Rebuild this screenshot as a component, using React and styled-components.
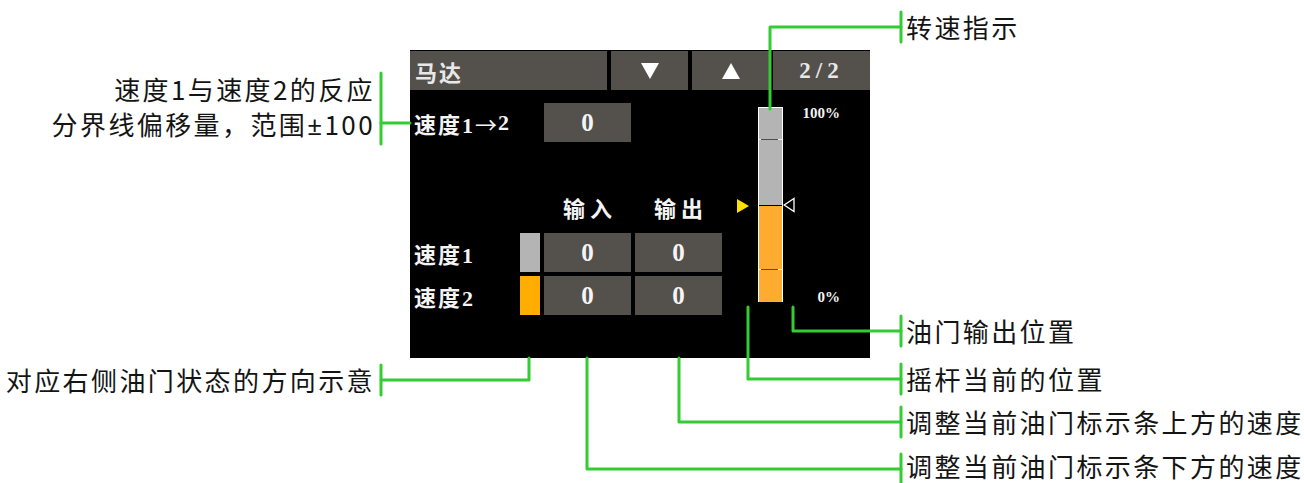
import React from "react";
import styled, { createGlobalStyle } from "styled-components";

const GREEN = "#33cc33";
const PANEL = "#54504c";

const GlobalStyle = createGlobalStyle`
    html, body {
        margin: 0;
        padding: 0;
        background: #fff;
    }
    body {
        font-family: "Noto Sans CJK SC", sans-serif;
    }
`;

const Canvas = styled.div`
    position: relative;
    width: 1304px;
    height: 483px;
    box-sizing: border-box;
    padding: 50px 0 0 410px;
    background: #fff;
    overflow: hidden;
`;

const Screen = styled.div`
    width: 460px;
    height: 308px;
    box-sizing: border-box;
    padding-top: 1px;
    display: flex;
    flex-direction: column;
    background: #000;
    color: #f4f4f4;
    font-family: "Liberation Serif", "Noto Sans CJK SC", serif;
    font-weight: 700;
`;

const Header = styled.div`
    display: grid;
    grid-template-columns: 197px 77px 77px 1fr;
    column-gap: 4px;
    height: 39px;
`;

const HeadCell = styled.div`
    display: flex;
    align-items: center;
    justify-content: ${props => (props.$left ? "flex-start" : "center")};
    padding-left: ${props => (props.$left ? "5px" : "0")};
    background: ${PANEL};
    color: #e8e8e8;
    font-size: ${props => props.$size || 22}px;
    letter-spacing: ${props => props.$spacing || 2}px;
`;

const Body = styled.div`
    display: flex;
    flex: 1;
`;

const Table = styled.div`
    width: 312px;
    display: grid;
    grid-template-columns: 106px 20px 87px 87px;
    grid-template-rows: 39px 83px 39px 39px;
    gap: 4px;
    padding-top: 13px;
    align-content: start;
`;

const RowLabel = styled.div`
    grid-row: ${props => props.$row};
    grid-column: 1 / 3;
    display: flex;
    align-items: center;
    padding-left: 4px;
    font-size: 22px;
    letter-spacing: 2px;
    white-space: nowrap;
`;

const Arrow = styled.span`
    font-family: "Noto Sans CJK SC", sans-serif;
    font-weight: 400;
    letter-spacing: 0;
    margin-right: 1px;
`;

const ColHead = styled.div`
    grid-row: 2;
    grid-column: ${props => props.$col};
    align-self: end;
    padding: 0 0 7px 5px;
    text-align: center;
    font-size: 22px;
    line-height: 24px;
    letter-spacing: 5px;
`;

const Swatch = styled.div`
    grid-row: ${props => props.$row};
    grid-column: 2;
    background: ${props => props.$color};
`;

const Value = styled.div`
    grid-row: ${props => props.$row};
    grid-column: ${props => props.$col};
    display: flex;
    align-items: center;
    justify-content: center;
    background: ${PANEL};
    font-size: 25px;
`;

const Gauge = styled.div`
    display: flex;
    height: 195px;
    margin-top: 17px;
`;

const MarkerCol = styled.div`
    position: relative;
    width: 36px;
`;

const Pointer = styled.svg`
    position: absolute;
    right: 9px;
    width: 12px;
    height: 14px;
`;

const Bar = styled.div`
    position: relative;
    width: 25px;
    box-sizing: border-box;
    border: 1px solid #fff;
    border-bottom: none;
    display: flex;
    flex-direction: column;
`;

const Fill = styled.div`
    background: ${props => props.$color};
    border-top: ${props => (props.$split ? "1px solid #000" : "none")};
`;

const Tick = styled.div`
    position: absolute;
    left: 0;
    right: 0;
    height: 1px;
    background: linear-gradient(to right, #f0f0f0 0 2px, #4e4e4e 2px calc(100% - 4px), #f0f0f0 calc(100% - 4px));
`;

const OutputMark = styled.svg`
    position: absolute;
    left: 100%;
    margin-left: 1px;
    width: 12px;
    height: 16px;
`;

const Scale = styled.div`
    width: 57px;
    display: flex;
    flex-direction: column;
    justify-content: space-between;
    align-items: flex-end;
    margin: -2px 0 -3px;
    font-size: 15px;
    line-height: 16px;
`;

const Leaders = styled.svg`
    position: absolute;
    left: 0;
    top: 0;
    pointer-events: none;
`;

const Callout = styled.div`
    position: absolute;
    top: ${props => props.$top}px;
    ${props => (props.$right != null ? `right: ${props.$right}px;` : `left: ${props.$left}px;`)}
    text-align: ${props => (props.$right != null ? "right" : "left")};
    color: #141414;
    font-family: "Noto Sans CJK SC", sans-serif;
    font-size: 26px;
    line-height: ${props => props.$lh || 28}px;
    letter-spacing: 2.4px;
    white-space: nowrap;
`;

const Plain = styled.span`
    font-family: "Noto Sans", sans-serif;
`;

const leaders = [
    "M770 109 V27 H901",
    "M901 12 V42",
    "M793 307 V331 H901",
    "M901 316 V346",
    "M748 307 V379 H901",
    "M901 364 V394",
    "M679 358 V422 H901",
    "M901 407 V437",
    "M587 358 V469 H901",
    "M901 454 V484",
    "M529 358 V380 H381",
    "M381 365 V395",
    "M381 123 H410",
    "M381 73 V144",
];

const callouts = [
    { y: 27, left: 906, text: "转速指示" },
    { y: 331, left: 906, text: "油门输出位置" },
    { y: 379, left: 906, text: "摇杆当前的位置" },
    { y: 422, left: 906, text: "调整当前油门标示条上方的速度" },
    { y: 466, left: 906, text: "调整当前油门标示条下方的速度" },
    { y: 380, right: 929, text: "对应右侧油门状态的方向示意" },
];

function App() {
    const throttle = 50;

    return (
        <>
            <GlobalStyle />
            <Canvas>
                <Screen>
                    <Header>
                        <HeadCell $left>马达</HeadCell>
                        <HeadCell>
                            <svg width="18" height="16" viewBox="0 0 18 16">
                                <path d="M0 0 H18 L9 16 Z" fill="#fff" />
                            </svg>
                        </HeadCell>
                        <HeadCell>
                            <svg width="18" height="16" viewBox="0 0 18 16">
                                <path d="M9 0 L18 16 H0 Z" fill="#fff" />
                            </svg>
                        </HeadCell>
                        <HeadCell $size={23} $spacing={5}>2/2</HeadCell>
                    </Header>
                    <Body>
                        <Table>
                            <RowLabel $row={1}>
                                速度1<Arrow>→</Arrow>2
                            </RowLabel>
                            <Value $row={1} $col={3}>0</Value>
                            <ColHead $col={3}>输入</ColHead>
                            <ColHead $col={4}>输出</ColHead>
                            <RowLabel $row={3}>速度1</RowLabel>
                            <Swatch $row={3} $color="#b4b4b4" />
                            <Value $row={3} $col={3}>0</Value>
                            <Value $row={3} $col={4}>0</Value>
                            <RowLabel $row={4}>速度2</RowLabel>
                            <Swatch $row={4} $color="#ffad00" />
                            <Value $row={4} $col={3}>0</Value>
                            <Value $row={4} $col={4}>0</Value>
                        </Table>
                        <Gauge>
                            <MarkerCol>
                                <Pointer viewBox="0 0 12 14" style={{ top: `calc(${throttle}% - 6px)` }}>
                                    <path d="M0 0 L12 7 L0 14 Z" fill="#ffe100" />
                                </Pointer>
                            </MarkerCol>
                            <Bar>
                                <Fill $color="#b4b4b4" style={{ flex: 100 - throttle }} />
                                <Fill $color="#fdac30" $split style={{ flex: throttle }} />
                                <Tick style={{ top: "16%" }} />
                                <Tick style={{ top: "83%" }} />
                                <OutputMark viewBox="0 0 12 16" style={{ top: `calc(${throttle}% - 8px)` }}>
                                    <path d="M11 1.5 V14.5 L1.2 8 Z" fill="none" stroke="#fff" strokeWidth="1.3" />
                                </OutputMark>
                            </Bar>
                            <Scale>
                                <span>100%</span>
                                <span>0%</span>
                            </Scale>
                        </Gauge>
                    </Body>
                </Screen>

                <Leaders width="1304" height="483" viewBox="0 0 1304 483">
                    {leaders.map(d => (
                        <path key={d} d={d} fill="none" stroke={GREEN} strokeWidth="3" strokeLinecap="round" strokeLinejoin="round" />
                    ))}
                </Leaders>

                <Callout $top={71} $right={929} $lh={35}>
                    速度1与速度2的反应
                    <br />
                    分界线偏移量，范围<Plain>±</Plain>100
                </Callout>
                {callouts.map(c => (
                    <Callout key={c.text} $top={c.y - 14} $left={c.left} $right={c.right}>
                        {c.text}
                    </Callout>
                ))}
            </Canvas>
        </>
    );
}

export default App;
